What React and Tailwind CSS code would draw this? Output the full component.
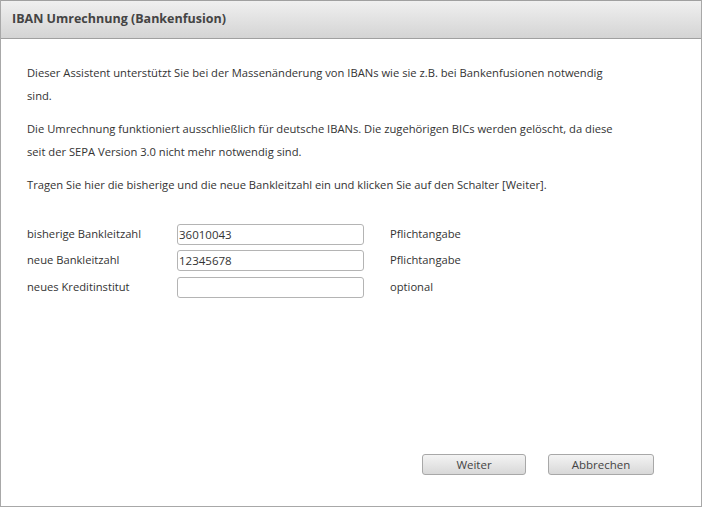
import React, { useState } from 'react';

function FormRow({ label, value, onChange, hint }) {
  return (
    <div className="flex items-center h-[26.5px]">
      <div className="w-[150px]">{label}</div>
      <input
        type="text"
        value={value}
        onChange={(e) => onChange(e.target.value)}
        className="w-[187px] h-[21px] border border-[#b4b4b4] rounded-[3px] px-[1px] text-[11.5px] text-[#333] outline-none bg-white"
      />
      <div className="ml-[26px]">{hint}</div>
    </div>
  );
}

export default function App() {
  const [oldBlz, setOldBlz] = useState("36010043");
  const [newBlz, setNewBlz] = useState("12345678");
  const [bank, setBank] = useState("");

  return (
    <div
      className="w-[702px] h-[507px] bg-white flex flex-col border-l border-r border-b border-[#a8a8a8] text-[11.2px] text-[#333]"
      style={{ fontFamily: '"Open Sans", "Noto Sans", sans-serif' }}
    >
      {/* Header */}
      <div className="h-[39px] shrink-0 flex items-center px-[11px] bg-gradient-to-b from-[#f0f0f0] to-[#d4d4d4] border-t border-b border-[#a0a0a0]">
        <span className="font-bold text-[12.5px] text-[#444]">IBAN Umrechnung (Bankenfusion)</span>
      </div>

      {/* Body */}
      <div className="flex-1 flex flex-col px-[26px] pt-[22px]">
        <p className="leading-[23px]">
          Dieser Assistent unterstützt Sie bei der Massenänderung von IBANs wie sie z.B. bei Bankenfusionen notwendig
          <br />
          sind.
        </p>
        <p className="leading-[23px] mt-[10px]">
          Die Umrechnung funktioniert ausschließlich für deutsche IBANs. Die zugehörigen BICs werden gelöscht, da diese
          <br />
          seit der SEPA Version 3.0 nicht mehr notwendig sind.
        </p>
        <p className="leading-[23px] mt-[10px]">
          Tragen Sie hier die bisherige und die neue Bankleitzahl ein und klicken Sie auf den Schalter [Weiter].
        </p>

        <div className="mt-[25px] flex flex-col">
          <FormRow label="bisherige Bankleitzahl" value={oldBlz} onChange={setOldBlz} hint="Pflichtangabe" />
          <FormRow label="neue Bankleitzahl" value={newBlz} onChange={setNewBlz} hint="Pflichtangabe" />
          <FormRow label="neues Kreditinstitut" value={bank} onChange={setBank} hint="optional" />
        </div>

        <div className="mt-auto mb-[31px] flex justify-end gap-[22px] pr-[21px]">
          <button className="w-[104px] h-[21px] rounded-[3px] border border-[#a8a8a8] bg-gradient-to-b from-[#f4f4f4] to-[#d8d8d8] text-[11.5px] text-[#444]">
            Weiter
          </button>
          <button className="w-[106px] h-[21px] rounded-[3px] border border-[#a8a8a8] bg-gradient-to-b from-[#f4f4f4] to-[#d8d8d8] text-[11.5px] text-[#444]">
            Abbrechen
          </button>
        </div>
      </div>
    </div>
  );
}
